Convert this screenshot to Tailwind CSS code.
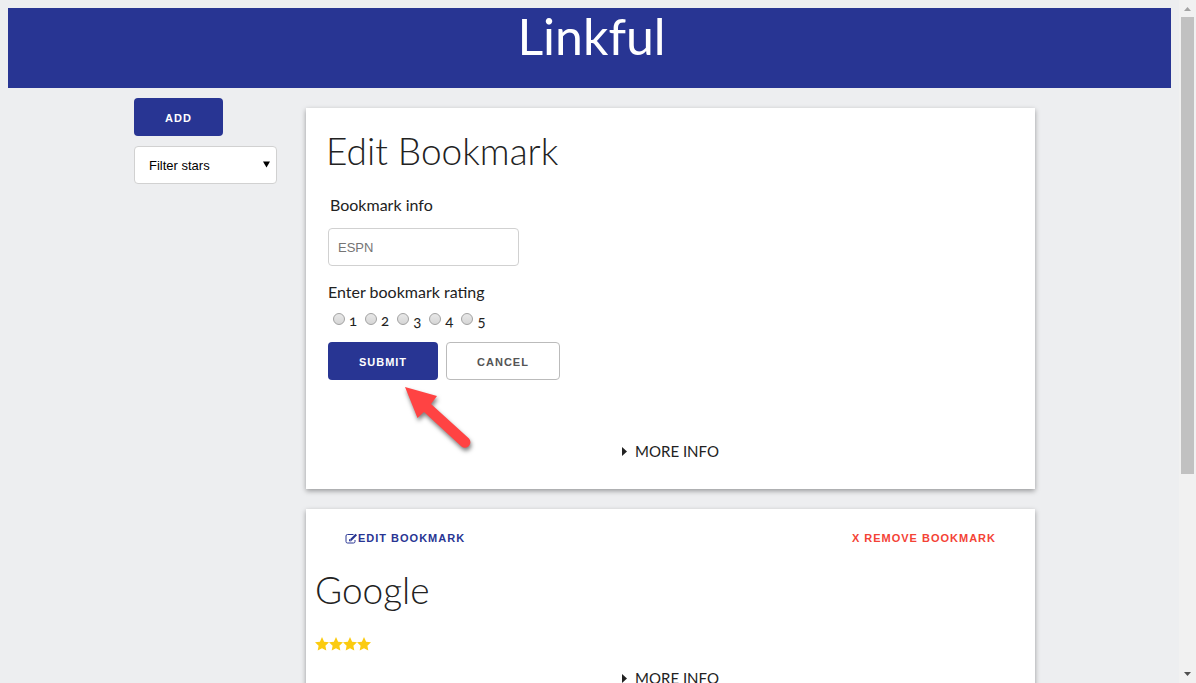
<!DOCTYPE html>
<html lang="en">
<head>
<meta charset="utf-8">
<meta name="viewport" content="width=device-width, initial-scale=1">
<title>Linkful</title>
<script src="https://cdn.jsdelivr.net/npm/@tailwindcss/browser@4"></script>
</head>
<body class="flex h-screen overflow-hidden bg-[#edeef0] font-['Lato',sans-serif] text-[15px] text-[#222]">
<div class="min-w-0 flex-1 px-2 pt-2">
  <header class="h-20 bg-[#283593] text-center text-white">
    <h1 class="pl-1 text-[50px] leading-14 font-normal">Linkful</h1>
  </header>
  <div class="mx-auto flex max-w-[911px] items-start">
    <aside class="w-[162px] shrink-0 pt-[10px] font-['Liberation_Sans',sans-serif]">
      <button type="button" class="block h-[38px] w-[89px] rounded bg-[#283593] pt-[2px] text-[11px] font-bold tracking-[1px] text-white">ADD</button>
      <div class="relative mt-[10px] w-[143px]">
        <select aria-label="Filter stars" class="h-[38px] w-full appearance-none rounded border border-[#d1d1d1] bg-white pt-[2px] pl-[14px] text-[13px] text-black">
          <option>Filter stars</option>
        </select>
        <svg class="pointer-events-none absolute top-[15px] right-[7px] h-[7px] w-[7px]" viewBox="0 0 7 7" aria-hidden="true"><path d="M0 .5h7L3.500 6.500z"/></svg>
      </div>
    </aside>
    <main class="min-w-0 flex-1 px-[10px] pt-5">
      <section class="h-[381px] bg-white px-5 pt-[19px] shadow-[0_2px_5px_rgba(0,0,0,.36)]">
        <h2 class="text-[37px] leading-12 font-light">Edit Bookmark</h2>
        <form class="px-[2px]">
          <label for="info" class="mt-[18px] block pl-[2px] text-base leading-6">Bookmark info</label>
          <input id="info" type="text" placeholder="ESPN" class="mt-[11px] block h-[38px] w-[191px] rounded border border-[#d1d1d1] px-[9px] font-['Liberation_Sans',sans-serif] text-[13px] placeholder:text-[#757575]">
          <fieldset>
            <legend class="pt-[14px] text-base leading-6">Enter bookmark rating</legend>
            <div class="flex h-8 items-center gap-2 pl-[5px] oldstyle-nums">
              <label class="flex items-center gap-1"><input type="radio" name="rating" class="mb-[2px] size-3 appearance-none rounded-full border border-[#a2a2a2] bg-linear-to-b from-[#e8e8e8] to-[#d6d6d6]">1</label>
              <label class="flex items-center gap-1"><input type="radio" name="rating" class="mb-[2px] size-3 appearance-none rounded-full border border-[#a2a2a2] bg-linear-to-b from-[#e8e8e8] to-[#d6d6d6]">2</label>
              <label class="flex items-center gap-1"><input type="radio" name="rating" class="mb-[2px] size-3 appearance-none rounded-full border border-[#a2a2a2] bg-linear-to-b from-[#e8e8e8] to-[#d6d6d6]">3</label>
              <label class="flex items-center gap-1"><input type="radio" name="rating" class="mb-[2px] size-3 appearance-none rounded-full border border-[#a2a2a2] bg-linear-to-b from-[#e8e8e8] to-[#d6d6d6]">4</label>
              <label class="flex items-center gap-1"><input type="radio" name="rating" class="mb-[2px] size-3 appearance-none rounded-full border border-[#a2a2a2] bg-linear-to-b from-[#e8e8e8] to-[#d6d6d6]">5</label>
            </div>
          </fieldset>
          <div class="relative mt-[6px] flex gap-2 font-['Liberation_Sans',sans-serif] text-[11px] tracking-[1px]">
            <button type="submit" class="h-[38px] w-[110px] rounded bg-[#283593] pt-[2px] font-bold text-white">SUBMIT</button>
            <button type="button" class="h-[38px] w-[114px] rounded border border-[#bbb] pt-[2px] font-bold text-[#555]">CANCEL</button>
            <svg class="pointer-events-none absolute top-[41px] left-[73px] h-[72px] w-20 drop-shadow-[1px_3px_2px_rgba(0,0,0,.5)]" viewBox="0 0 80 72" aria-hidden="true"><path fill="#ff4343" d="M4 4 36 13 30 21 68 55.500a5.500 5.500 0 0 1-7.500 8L23 29l-6.500 6z"/></svg>
          </div>
        </form>
        <details class="mt-[59px] text-center">
          <summary class="flex items-center justify-center gap-2 leading-6"><svg class="h-[9px] w-[5px]" viewBox="0 0 5 9" fill="#222" aria-hidden="true"><path d="M0 0 5 4.500 0 9z"/></svg>MORE INFO</summary>
        </details>
      </section>
      <section class="mt-5 h-[400px] bg-white px-[9px] pt-[17px] shadow-[0_2px_5px_rgba(0,0,0,.36)]">
        <div class="flex justify-between px-[30px] font-['Liberation_Sans',sans-serif] text-[11px] leading-6 font-bold tracking-[1px]">
          <button type="button" class="flex items-center text-[#283593]"><svg class="h-[11px] w-[13px]" viewBox="0 0 13 11" fill="none" stroke="#283593" aria-hidden="true"><path stroke-width="1" d="M8.500 1.500H2.500a1.500 1.500 0 0 0-1.500 1.500v5.500A1.500 1.500 0 0 0 2.500 10h6A1.500 1.500 0 0 0 10 8.500V7"/><path stroke-width="2.200" d="M5.800 7 11.300 1.500"/><path stroke-width="1" d="m4.800 6-.3 2 2-.3"/></svg>EDIT BOOKMARK</button>
          <button type="button" class="text-[#f44336]">X REMOVE BOOKMARK</button>
        </div>
        <h2 class="mt-4 text-[37px] leading-12 font-light">Google</h2>
        <div class="mt-[23px] flex" role="img" aria-label="4 stars">
          <svg class="h-[14px] w-14" viewBox="0 0 56 14" fill="#fbcb10"><defs><path id="star" d="m7 0 2.100 4.700 4.900.6-3.600 3.400.9 4.900L7 11.200l-4.300 2.400.9-4.900L0 5.300l4.900-.6z"/></defs><use href="#star"/><use href="#star" x="14"/><use href="#star" x="28"/><use href="#star" x="42"/></svg>
        </div>
        <details class="mt-[15px] text-center">
          <summary class="flex items-center justify-center gap-2 leading-6"><svg class="h-[9px] w-[5px]" viewBox="0 0 5 9" fill="#222" aria-hidden="true"><path d="M0 0 5 4.500 0 9z"/></svg>MORE INFO</summary>
        </details>
      </section>
    </main>
  </div>
</div>
<div class="flex h-full w-[17px] shrink-0 flex-col items-center bg-[#f1f1f1]" aria-hidden="true">
  <svg class="h-[17px] w-[17px] shrink-0" viewBox="0 0 17 17" fill="#a3a3a3"><path d="M5 11h7L8.500 7z"/></svg>
  <div class="min-h-0 w-[13px] grow-[457] basis-0 bg-[#c1c1c1]"></div>
  <div class="min-h-0 grow-[192] basis-0"></div>
  <svg class="h-[17px] w-[17px] shrink-0" viewBox="0 0 17 17" fill="#505050"><path d="M5 6h7l-3.500 4z"/></svg>
</div>
</body>
</html>
